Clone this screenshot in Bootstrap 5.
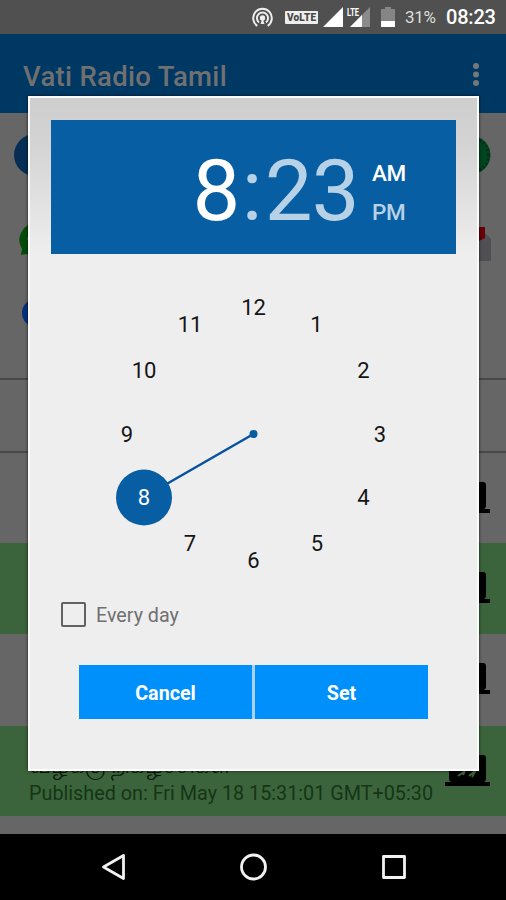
<!DOCTYPE html>
<html lang="en">
<head>
<meta charset="utf-8">
<meta name="viewport" content="width=device-width, initial-scale=1">
<title>Vati Radio Tamil</title>
<link href="https://cdn.jsdelivr.net/npm/bootstrap@5.3.0/dist/css/bootstrap.min.css" rel="stylesheet">
<style>
body{font-family:Roboto,"Liberation Sans",sans-serif;background:#000}
svg{display:block;flex:none}
.phone{width:506px;height:900px;background:#666}
.status{height:34px;background:#505050;padding-right:11px}
.status-batt{font-size:17px;color:#ddd;width:31px;margin-left:10px;line-height:36px;letter-spacing:-.3px}
.status-time{font-size:20px;font-weight:500;width:49px;margin-left:10px;line-height:36px;letter-spacing:-.2px}
.appbar{height:79px;background:#003864;color:#707070;padding:4px 26px 0 23px}
.appbar h1{font-size:27.5px;font-weight:500;letter-spacing:.3px;line-height:1;padding-top:2px}
.shortcuts{height:265px;padding:20px 14px 0}
.empty-row{height:73px;border-top:2px solid #484848}
.feed-row{padding:0 16px 0 29px;height:92px}
.feed-row.first{border-top:2px solid #484848}
.feed-row.second{height:91px}
.feed-row.last{height:90px}
.feed-row.alt{background:#3c643c}
.feed-copy{color:#153515;padding-top:28px;font-size:19.8px}
.feed-title{color:#0a150a;font-size:23px;font-weight:500;line-height:24px;height:28px;white-space:nowrap}
.feed-date{line-height:23px;white-space:nowrap}
.feed-icon{margin-top:29px}
.list-end{height:18px}
.navkeys{height:66px;background:#000}
.alarm{left:28px;top:96px;width:451px;height:675px;border:2px solid #fafafa;
 background:linear-gradient(#cecece 0,#d3d3d3 45px,#eee 155px);box-shadow:0 0 3px rgba(0,0,0,.7);padding:22px 21px 0}
.timebox{width:405px;height:134px;background:#075ea3;padding-right:50px}
.digits{font-size:85px;line-height:134px;color:#b7d2e6;margin-right:13px;padding-top:7px;letter-spacing:-.6px}
.hour{margin-right:2px}
.colon{margin-right:3px}
.ampm{font-size:22.5px;font-weight:500;line-height:38.5px;color:#b7d2e6;letter-spacing:-.3px;padding-top:11px}
.dial{font-size:22px;fill:#151515;text-anchor:middle}
.every{height:32px;margin-left:10px;color:#707070;font-size:19.7px;gap:10px}
.every span:last-child{padding-top:3px}
.tick{width:25px;height:25px;border:2.5px solid #616161;border-radius:2px}
.actions{margin:35px 0 0 28px;width:349px;height:54px;gap:3px;background:#a8d2f8}
.actions .btn{background:#0090fc;color:#fff;font-weight:700;font-size:19.7px;padding:4px 0 0}
</style>
</head>
<body>
<div class="phone position-relative overflow-hidden">
  <header class="status d-flex align-items-center justify-content-end text-white">
    <svg width="131" height="34" viewBox="0 0 131 34">
      <g fill="none" stroke="#eee" stroke-width="2">
        <path d="M7.300 25.800a9.300 9.300 0 1 1 10.400 0"/><path d="M9 22.500a5.600 5.600 0 1 1 7 0"/>
      </g>
      <circle cx="12.500" cy="18" r="2.700" fill="#eee"/><path d="M12.500 18l2 6h-4z" fill="#eee"/>
      <rect x="35" y="11" width="33" height="13" rx="1" fill="#eee"/>
      <text x="51.500" y="21.300" font-size="10" font-weight="900" fill="#484848" text-anchor="middle" textLength="29">VoLTE</text>
      <path d="M93 7v20H73z" fill="#fff"/>
      <path d="M120 7v20h-20z" fill="#8b8b8b"/><path d="M112 15v12h-12z" fill="#fff"/>
      <path d="M96 7h14v9H96z" fill="#505050"/>
      <text x="97" y="16" font-size="10.500" font-weight="700" fill="#fff" textLength="12" lengthAdjust="spacingAndGlyphs">LTE</text>
    </svg>
    <svg width="14" height="34" viewBox="0 0 14 34"><path d="M0 9h4V7h6v2h4v12H0z" fill="#858585"/><path d="M0 21h14v6H0z" fill="#fff"/></svg>
    <span class="status-batt">31%</span><span class="status-time">08:23</span>
  </header>
  <nav class="appbar d-flex align-items-center justify-content-between">
    <h1 class="m-0">Vati Radio Tamil</h1>
    <svg width="8" height="26" viewBox="0 0 8 26" fill="#777"><circle cx="4" cy="3" r="3"/><circle cx="4" cy="11.500" r="3"/><circle cx="4" cy="20" r="3"/></svg>
  </nav>
  <main>
    <section class="shortcuts d-flex justify-content-between">
      <svg width="44" height="200" viewBox="14 133 44 200">
        <circle cx="35" cy="155" r="21" fill="#062d54"/>
        <path d="M36 223a17 17 0 0 0-14 26l-1 6 6-1a17 17 0 1 0 9-31z" fill="#044d08"/>
        <path d="M27 239l3-7 3 2-1 5 4 5v6z" fill="#666"/>
        <circle cx="36" cy="313" r="14" fill="#07307c"/>
      </svg>
      <svg width="44" height="200" viewBox="448 133 44 200">
        <circle cx="471.500" cy="155" r="19" fill="#00451f"/><circle cx="471.500" cy="155" r="17" fill="none" stroke="#063018" stroke-width="3" stroke-dasharray="2 2"/>
        <path d="M460 232h24l7 7v22h-31z" fill="#505054"/><path d="M460 227h25v11l-6 3h-19z" fill="#690006"/>
      </svg>
    </section>
    <div class="empty-row"></div>
    <div class="feed-row first d-flex justify-content-end"><svg class="feed-icon" width="45" height="32" viewBox="0 0 45 32"><path d="M4 3q0-3 3-3h31q3 0 3 3v21q0 2-2 3h6v4H0v-4h6q-2-1-2-3z"/></svg></div>
    <div class="feed-row second alt d-flex justify-content-end"><svg class="feed-icon" width="45" height="32" viewBox="0 0 45 32"><path d="M4 3q0-3 3-3h31q3 0 3 3v21q0 2-2 3h6v4H0v-4h6q-2-1-2-3z"/></svg></div>
    <div class="feed-row d-flex justify-content-end"><svg class="feed-icon" width="45" height="32" viewBox="0 0 45 32"><path d="M4 3q0-3 3-3h31q3 0 3 3v21q0 2-2 3h6v4H0v-4h6q-2-1-2-3z"/></svg></div>
    <div class="feed-row last alt d-flex justify-content-between">
      <div class="feed-copy"><div class="feed-title" lang="ta">வழக்கு நிகழ்ச்சிகள்</div><div class="feed-date">Published on: Fri May 18 15:31:01 GMT+05:30</div></div>
      <svg class="feed-icon" width="45" height="32" viewBox="0 0 45 32"><path d="M4 3q0-3 3-3h31q3 0 3 3v21q0 2-2 3h6v4H0v-4h6q-2-1-2-3z"/><path d="M13 21l7-5-2 4M24 21l7-6-4 7" fill="none" stroke="#3c643c" stroke-width="1.800"/></svg>
    </div>
    <div class="list-end"></div>
  </main>
  <footer class="navkeys d-flex justify-content-center">
    <svg width="310" height="66" viewBox="98 834 310 66" fill="none" stroke="#f2f2f2" stroke-width="2.800" stroke-linejoin="round"><path d="M103.500 867l20-11.500v23z"/><circle cx="253.500" cy="867" r="12"/><rect x="383.500" y="856.500" width="21" height="21"/></svg>
  </footer>

  <section class="alarm position-absolute" role="dialog">
    <div class="timebox d-flex justify-content-end align-items-center">
      <div class="digits"><span class="hour text-white">8</span><span class="colon">:</span>23</div>
      <div class="ampm d-flex flex-column"><span class="text-white">AM</span><span>PM</span></div>
    </div>
    <svg class="dial" width="405" height="344" viewBox="51 254 405 344">
      <path d="M253.500 434L144 497" stroke="#0752a0" stroke-width="2.500"/><circle cx="253.500" cy="434" r="4" fill="#075ea3"/><circle cx="144" cy="497.500" r="28" fill="#075ea3"/>
      <text x="253.500" y="315.400">12</text><text x="316.500" y="332.400">1</text><text x="363.500" y="378.400">2</text><text x="380" y="442">3</text><text x="363.500" y="505">4</text><text x="317" y="551.400">5</text><text x="253.500" y="568.400">6</text><text x="190" y="551.400">7</text><text x="144" y="505" fill="#fff">8</text><text x="127" y="442">9</text><text x="144" y="378.400">10</text><text x="190" y="332.400">11</text>
    </svg>
    <label class="every d-flex align-items-center"><span class="tick"></span><span>Every day</span></label>
    <div class="actions d-flex"><button class="btn rounded-0 border-0 flex-fill w-50">Cancel</button><button class="btn rounded-0 border-0 flex-fill w-50">Set</button></div>
  </section>
</div>
<script src="https://cdn.jsdelivr.net/npm/bootstrap@5.3.0/dist/js/bootstrap.bundle.min.js"></script>
</body>
</html>
